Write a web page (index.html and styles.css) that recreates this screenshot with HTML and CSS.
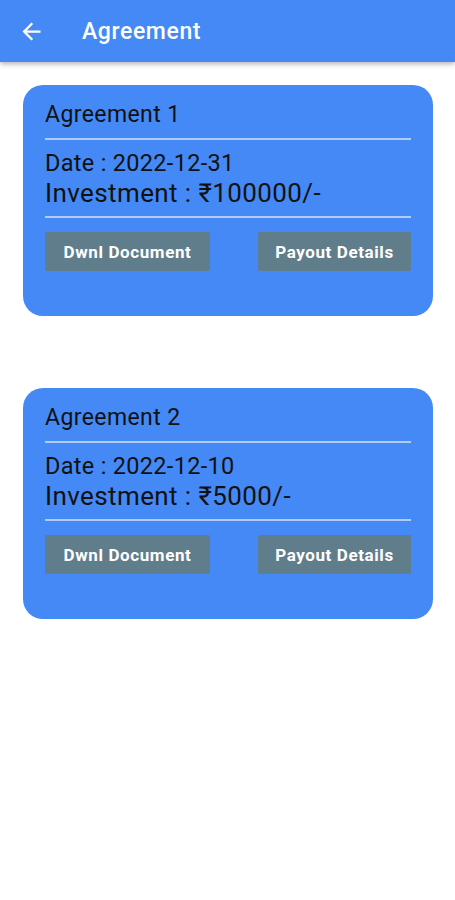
FILE: index.html
```html
<!DOCTYPE html>
<html lang="en">

<head>
    <meta charset="UTF-8">
    <meta name="viewport" content="width=device-width, initial-scale=1.0">
    <title>Agreement</title>
    <link rel="stylesheet" href="styles.css">
</head>

<body>
    <header class="appbar">
        <svg class="back" viewBox="0 0 24 24" width="27" height="27">
            <path d="M20 11H7.83l5.59-5.59L12 4l-8 8 8 8 1.41-1.41L7.83 13H20v-2z" fill="#fff"/>
        </svg>
        <h1>Agreement</h1>
    </header>

    <div class="list">
        <div class="card">
            <div class="card-title">Agreement 1</div>
            <div class="divider"></div>
            <div class="date">Date : 2022-12-31</div>
            <div class="amount">Investment : ₹100000/-</div>
            <div class="divider"></div>
            <div class="actions">
                <button class="btn-doc">Dwnl Document</button>
                <button class="btn-pay">Payout Details</button>
            </div>
        </div>

        <div class="card">
            <div class="card-title">Agreement 2</div>
            <div class="divider"></div>
            <div class="date">Date : 2022-12-10</div>
            <div class="amount">Investment : ₹5000/-</div>
            <div class="divider"></div>
            <div class="actions">
                <button class="btn-doc">Dwnl Document</button>
                <button class="btn-pay">Payout Details</button>
            </div>
        </div>
    </div>
</body>

</html>
```

FILE: styles.css
```css
body {
    margin: 0;
    font-family: Roboto, "Noto Sans", sans-serif;
    background-color: #fff;
}

.appbar {
    height: 62px;
    display: flex;
    align-items: center;
    padding-left: 18px;
    background-color: #4489f5;
    box-shadow: 0 2px 5px rgba(0, 0, 0, 0.3);
}

.back {
    display: block;
}

.appbar h1 {
    margin: 0 0 0 37px;
    color: #fff;
    font-size: 23px;
    font-weight: 500;
    letter-spacing: 0.6px;
}

.list {
    display: flex;
    flex-direction: column;
    gap: 72px;
    padding: 23px 22px 0 23px;
}

.card {
    background-color: #4489f5;
    border-radius: 20px;
    padding: 15px 22px 45px;
    color: #111;
}

.card-title {
    font-size: 23px;
    line-height: 30px;
    letter-spacing: 0.4px;
}

.divider {
    height: 2px;
    background-color: #b0cdfa;
    margin: 8px 0;
}

.date {
    font-size: 23.5px;
    line-height: 30px;
    letter-spacing: 0.3px;
}

.amount {
    font-size: 26px;
    line-height: 30px;
    letter-spacing: 0.4px;
    margin-bottom: 6px;
}

.actions {
    display: flex;
    justify-content: space-between;
    margin-top: 14px;
}

.actions button {
    height: 39px;
    border: none;
    border-radius: 2px;
    background-color: #607d8b;
    color: #fff;
    font-family: Roboto, sans-serif;
    font-size: 17px;
    font-weight: 700;
    letter-spacing: 0.6px;
    cursor: pointer;
}

.btn-doc {
    width: 165px;
}

.btn-pay {
    width: 153px;
}
```
